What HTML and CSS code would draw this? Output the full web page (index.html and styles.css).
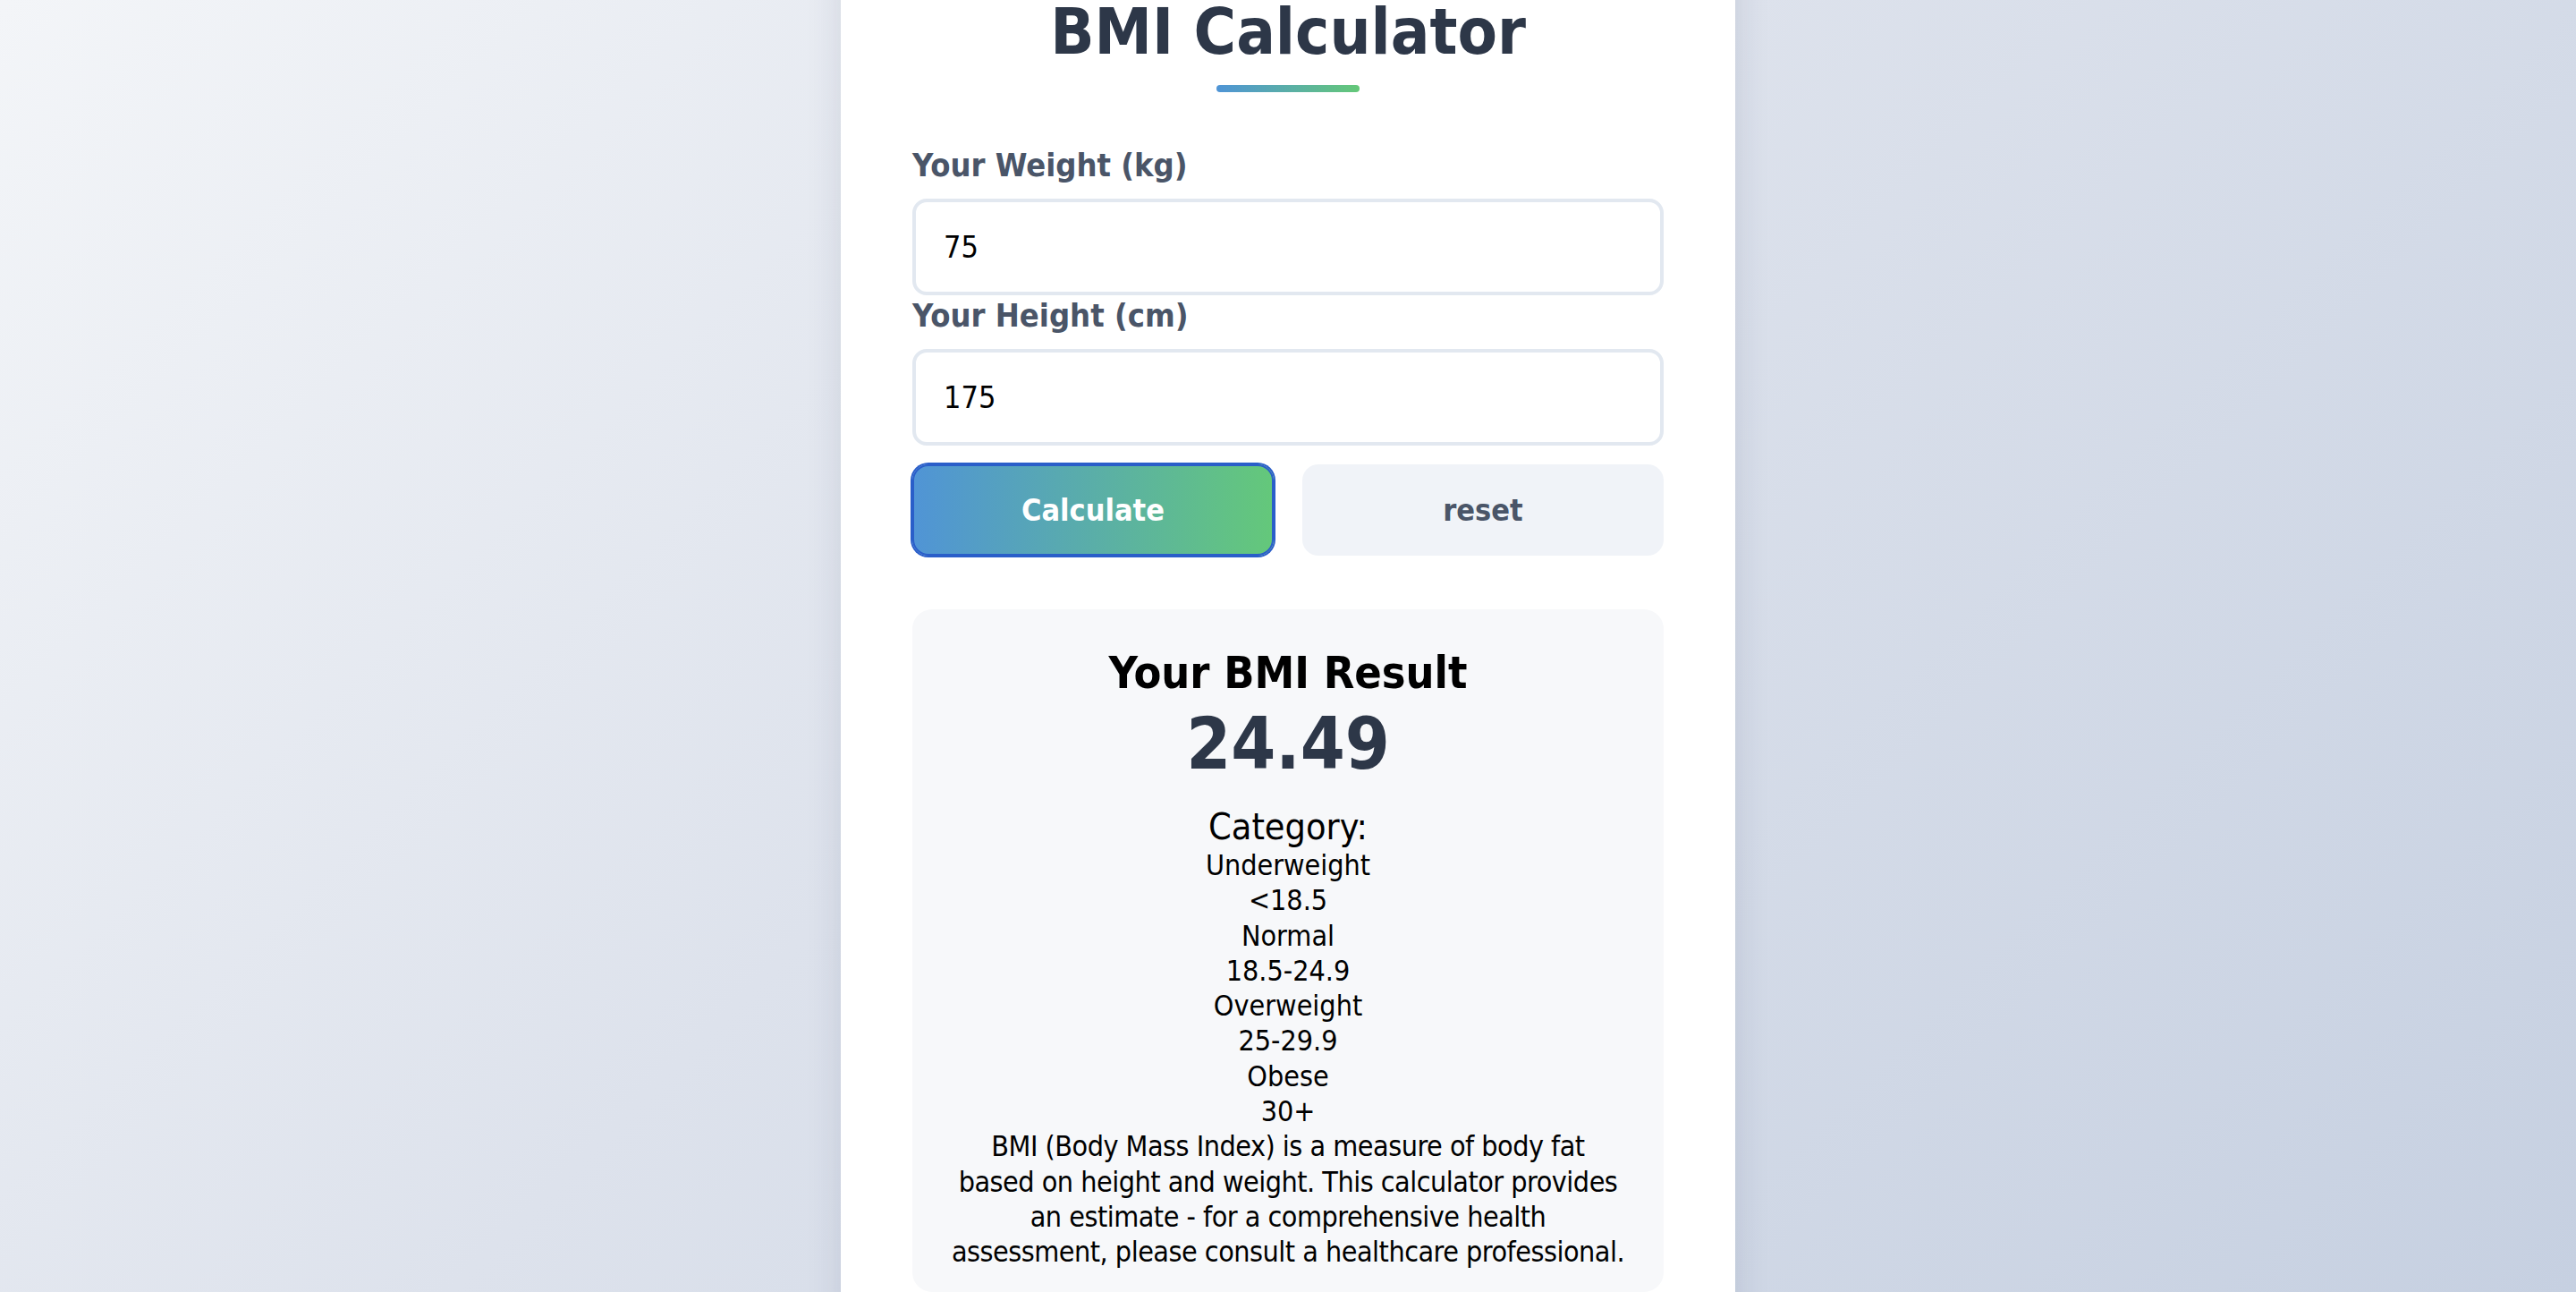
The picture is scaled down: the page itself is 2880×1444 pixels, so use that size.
FILE: index.html
```html
<!DOCTYPE html>
<html lang="en">
<head>
<meta charset="utf-8">
<title>BMI Calculator</title>
<link rel="stylesheet" href="styles.css">
</head>
<body>
<div class="page">
  <main class="card">
    <h1 class="title">BMI Calculator</h1>
    <div class="title-bar"></div>
    <form class="form">
      <div class="field">
        <label class="label" for="weight">Your Weight (kg)</label>
        <input class="input" id="weight" type="text" value="75">
      </div>
      <div class="field">
        <label class="label" for="height">Your Height (cm)</label>
        <input class="input" id="height" type="text" value="175">
      </div>
      <div class="actions">
        <button class="btn btn-primary" type="button">Calculate</button>
        <button class="btn btn-secondary" type="button">reset</button>
      </div>
    </form>
    <section class="result">
      <h2 class="result-title">Your BMI Result</h2>
      <div class="result-value">24.49</div>
      <div class="result-category">Category:</div>
      <div class="ranges">
        <div>Underweight</div>
        <div>&lt;18.5</div>
        <div>Normal</div>
        <div>18.5-24.9</div>
        <div>Overweight</div>
        <div>25-29.9</div>
        <div>Obese</div>
        <div>30+</div>
      </div>
      <p class="note">BMI (Body Mass Index) is a measure of body fat<br>based on height and weight. This calculator provides<br>an estimate - for a comprehensive health<br>assessment, please consult a healthcare professional.</p>
    </section>
  </main>
</div>
</body>
</html>
```
FILE: styles.css
```css
html, body {
  margin: 0;
  padding: 0;
}
body {
  height: 100vh;
  overflow: hidden;
  background: linear-gradient(135deg, #f3f5f8 0%, #dde2ec 45%, #c6d0e1 100%);
  font-family: "DejaVu Sans Condensed", "DejaVu Sans", sans-serif;
  font-stretch: condensed;
}
.page {
  display: flex;
  justify-content: center;
}
.card {
  width: 1000px;
  box-sizing: border-box;
  margin-top: -67px;
  padding: 60px 80px 80px;
  background: #ffffff;
  border-radius: 24px;
  box-shadow: 0 10px 40px rgba(30, 45, 80, 0.12);
}
.title {
  margin: 0;
  font-size: 72px;
  line-height: 84px;
  font-weight: 700;
  color: #2d3748;
  text-align: center;
}
.title-bar {
  width: 160px;
  height: 8px;
  margin: 18px auto 0;
  border-radius: 4px;
  background: linear-gradient(90deg, #4f94d6, #64c878);
}
.form {
  margin-top: 62px;
  display: flex;
  flex-direction: column;
}
.field {
  display: flex;
  flex-direction: column;
  margin-bottom: 3px;
}
.label {
  font-size: 36px;
  line-height: 40px;
  font-weight: 700;
  color: #4a5568;
  margin-bottom: 17px;
}
.input {
  box-sizing: border-box;
  width: 100%;
  height: 108px;
  padding: 0 31px;
  border: 4px solid #e2e8f0;
  border-radius: 16px;
  background: #fff;
  font-family: inherit;
  font-stretch: condensed;
  font-size: 34px;
  color: #000;
  outline: none;
}
.actions {
  display: flex;
  gap: 32px;
  margin-top: 18px;
}
.btn {
  flex: 1;
  height: 102px;
  border: none;
  border-radius: 18px;
  font-family: inherit;
  font-stretch: condensed;
  font-size: 34px;
  font-weight: 700;
  cursor: pointer;
}
.btn-primary {
  color: #ffffff;
  background: linear-gradient(90deg, #5094d6, #64c87a);
  box-shadow: 0 0 0 2px #2a5ec9, inset 0 0 0 2px #2a5ec9;
}
.btn-secondary {
  color: #4a5568;
  background: #f0f3f8;
}
.result {
  margin-top: 60px;
  padding: 42px 12px 24px;
  background: #f7f8fa;
  border-radius: 22px;
  text-align: center;
  color: #000;
}
.result-title {
  margin: 0;
  font-size: 50px;
  line-height: 58px;
  font-weight: 700;
}
.result-value {
  margin-top: 3px;
  font-size: 80px;
  line-height: 96px;
  font-weight: 700;
  color: #2d3748;
}
.result-category {
  margin-top: 20px;
  font-size: 41px;
  line-height: 48px;
}
.ranges {
  font-size: 32px;
  line-height: 39.3px;
}
.note {
  margin: 0;
  font-size: 32px;
  line-height: 39.3px;
  letter-spacing: -0.5px;
}
```
